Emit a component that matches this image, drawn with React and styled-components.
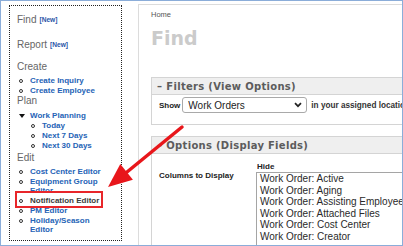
import React from "react";
import styled, { createGlobalStyle } from "styled-components";

const Global = createGlobalStyle`
  html, body { margin: 0; padding: 0; background: #fff; }
  body { font-family: "Liberation Sans", Arial, sans-serif; }
`;

const Frame = styled.div`
  position: relative;
  width: 403px;
  height: 246px;
  box-sizing: border-box;
  border: 1px solid #8badd9;
  background: #fff;
  overflow: hidden;
  display: flex;
  align-items: flex-start;
`;

const Sidebar = styled.nav`
  flex-shrink: 0;
  margin: 4px 0 0 8px;
  width: 113px;
  height: 236px;
  box-sizing: border-box;
  border: 1px dotted #222;
  padding: 9px 12px 0 7px;
  font-family: "Liberation Sans", Arial, sans-serif;
`;

const Heading = styled.div`
  font-size: 10px;
  line-height: 10px;
  color: #666;
  margin-top: ${(p) => p.$mt || 0}px;
  white-space: nowrap;
`;

const NewTag = styled.span`
  font-size: 6.6px;
  font-weight: bold;
  color: #2a55a8;
  margin-left: 3px;
  vertical-align: 1px;
`;

const List = styled.ul`
  list-style: none;
  margin: ${(p) => p.$mt || 0}px 0 0 ${(p) => p.$indent || 0}px;
  padding: 0;
`;

const Item = styled.li`
  position: relative;
  display: flex;
  align-items: flex-start;
  font-size: 8px;
  font-weight: bold;
  line-height: 9px;
  padding-bottom: 1px;
  color: ${(p) => (p.$current ? "#3c3c3c" : "#2563b6")};
  &::after {
    content: ${(p) => (p.$marked ? '""' : "none")};
    position: absolute;
    left: -2px;
    top: -5px;
    width: 88px;
    height: 17px;
    box-sizing: border-box;
    border: 2px solid #e8262a;
    pointer-events: none;
  }
`;

const Bullet = styled.span`
  flex-shrink: 0;
  width: 4px;
  height: 4px;
  box-sizing: border-box;
  border-radius: 50%;
  border: 1.3px solid #333;
  margin: 2.5px 7px 0 2px;
`;

const Triangle = styled.span`
  flex-shrink: 0;
  width: 0;
  height: 0;
  border-left: 3px solid transparent;
  border-right: 3px solid transparent;
  border-top: 4px solid #111;
  margin: 2.5px 5px 0 2px;
`;

const Main = styled.main`
  flex: 1;
  min-width: 0;
  margin: 3px 0 0 16px;
  align-self: stretch;
  border-top: 1px solid #dcdcdc;
  border-left: 1px solid #dcdcdc;
  padding: 5px 0 0 12px;
`;

const Crumb = styled.div`
  font-size: 7.5px;
  line-height: 10px;
  color: #555;
`;

const Title = styled.h1`
  margin: 9px 0 0;
  font-family: "DejaVu Sans", Verdana, sans-serif;
  font-weight: bold;
  font-size: 19px;
  line-height: 19px;
  color: #cbcbcb;
`;

const Panel = styled.section`
  margin: ${(p) => p.$mt}px -20px 0 0;
`;

const PanelHeader = styled.div`
  height: 18px;
  box-sizing: border-box;
  border: 1px solid #d4d4d4;
  background: #efefef;
  display: flex;
  align-items: center;
  padding-left: 5px;
  font-family: "DejaVu Sans", Verdana, sans-serif;
  font-weight: bold;
  font-size: 10px;
  letter-spacing: 0.3px;
  color: #5c5c5c;
  white-space: nowrap;
`;

const Dash = styled.span`
  margin-right: 4px;
`;

const PanelBody = styled.div`
  border: 1px solid #d4d4d4;
  border-top: none;
  background: #fff;
`;

const FilterRow = styled.div`
  height: 29px;
  box-sizing: border-box;
  padding: 2px 0 0 7px;
  display: flex;
  align-items: flex-start;
`;

const Inline = styled.div`
  display: flex;
  align-items: center;
  height: 16px;
`;

const Label = styled.span`
  font-size: 8px;
  font-weight: bold;
  color: #222;
  white-space: nowrap;
`;

const SelectBox = styled.div`
  width: 125px;
  height: 16px;
  box-sizing: border-box;
  margin-left: 2px;
  border: 1px solid #a9a9a9;
  border-radius: 3px;
  padding: 0 4px 0 5px;
  display: flex;
  align-items: center;
  justify-content: space-between;
  font-size: 10px;
  color: #222;
`;

const After = styled.span`
  margin-left: 4px;
  font-size: 8.2px;
  font-weight: bold;
  color: #333;
  white-space: nowrap;
`;

const OptionsGrid = styled.div`
  display: grid;
  grid-template-columns: 97px 1fr;
  padding: 8px 0 0 7px;
  height: 100px;
`;

const ColLabel = styled(Label)`
  display: block;
  margin-top: 9px;
  line-height: 10px;
`;

const HideLabel = styled(Label)`
  display: block;
  line-height: 10px;
  margin-left: 1px;
`;

const ListBox = styled.div`
  border: 1px solid #a5a5a5;
  padding: 0 0 0 3px;
  font-size: 10px;
  line-height: 11.6px;
  color: #2a2a2a;
  white-space: nowrap;
  overflow: hidden;
  height: 90px;
`;

const Arrow = styled.svg`
  position: absolute;
  top: -1px;
  left: -1px;
  pointer-events: none;
`;

const columns = [
  "Work Order: Active",
  "Work Order: Aging",
  "Work Order: Assisting Employee",
  "Work Order: Attached Files",
  "Work Order: Cost Center",
  "Work Order: Creator",
];

export default function App() {
  return (
    <>
      <Global />
      <Frame>
        <Sidebar>
          <Heading>
            Find<NewTag>[New]</NewTag>
          </Heading>
          <Heading $mt={15}>
            Report<NewTag>[New]</NewTag>
          </Heading>
          <Heading $mt={12}>Create</Heading>
          <List $mt={4}>
            <Item><Bullet />Create Inquiry</Item>
            <Item><Bullet />Create Employee</Item>
          </List>
          <Heading>Plan</Heading>
          <List $mt={5}>
            <Item><Triangle />Work Planning</Item>
          </List>
          <List $indent={12}>
            <Item><Bullet />Today</Item>
            <Item><Bullet />Next 7 Days</Item>
            <Item><Bullet />Next 30 Days</Item>
          </List>
          <Heading $mt={2}>Edit</Heading>
          <List $mt={4}>
            <Item><Bullet />Cost Center Editor</Item>
            <Item><Bullet /><span>Equipment Group Editor</span></Item>
            <Item $current $marked><Bullet />Notification Editor</Item>
            <Item><Bullet />PM Editor</Item>
            <Item><Bullet /><span>Holiday/Season Editor</span></Item>
          </List>
        </Sidebar>
        <Main>
          <Crumb>Home</Crumb>
          <Title>Find</Title>
          <Panel $mt={29}>
            <PanelHeader><Dash>–</Dash>Filters (View Options)</PanelHeader>
            <PanelBody>
              <FilterRow>
                <Inline>
                  <Label>Show</Label>
                  <SelectBox>
                    <span>Work Orders</span>
                    <svg width="8" height="6" viewBox="0 0 8 6">
                      <path d="M1 1.2 L4 4.2 L7 1.2" fill="none" stroke="#222" strokeWidth="1.7" />
                    </svg>
                  </SelectBox>
                  <After>in your assigned locations</After>
                </Inline>
              </FilterRow>
            </PanelBody>
          </Panel>
          <Panel $mt={11}>
            <PanelHeader><Dash>–</Dash>Options (Display Fields)</PanelHeader>
            <PanelBody>
              <OptionsGrid>
                <ColLabel>Columns to Display</ColLabel>
                <div>
                  <HideLabel>Hide</HideLabel>
                  <ListBox>
                    {columns.map((c) => (
                      <div key={c}>{c}</div>
                    ))}
                  </ListBox>
                </div>
              </OptionsGrid>
            </PanelBody>
          </Panel>
        </Main>
        <Arrow width="403" height="246" viewBox="0 0 403 246">
          <line x1="182" y1="127" x2="127" y2="172" stroke="#e8161b" strokeWidth="3.5" strokeLinecap="round" />
          <polygon points="108,187 132.9,179.7 120.3,164.1" fill="#e8161b" />
        </Arrow>
      </Frame>
    </>
  );
}
